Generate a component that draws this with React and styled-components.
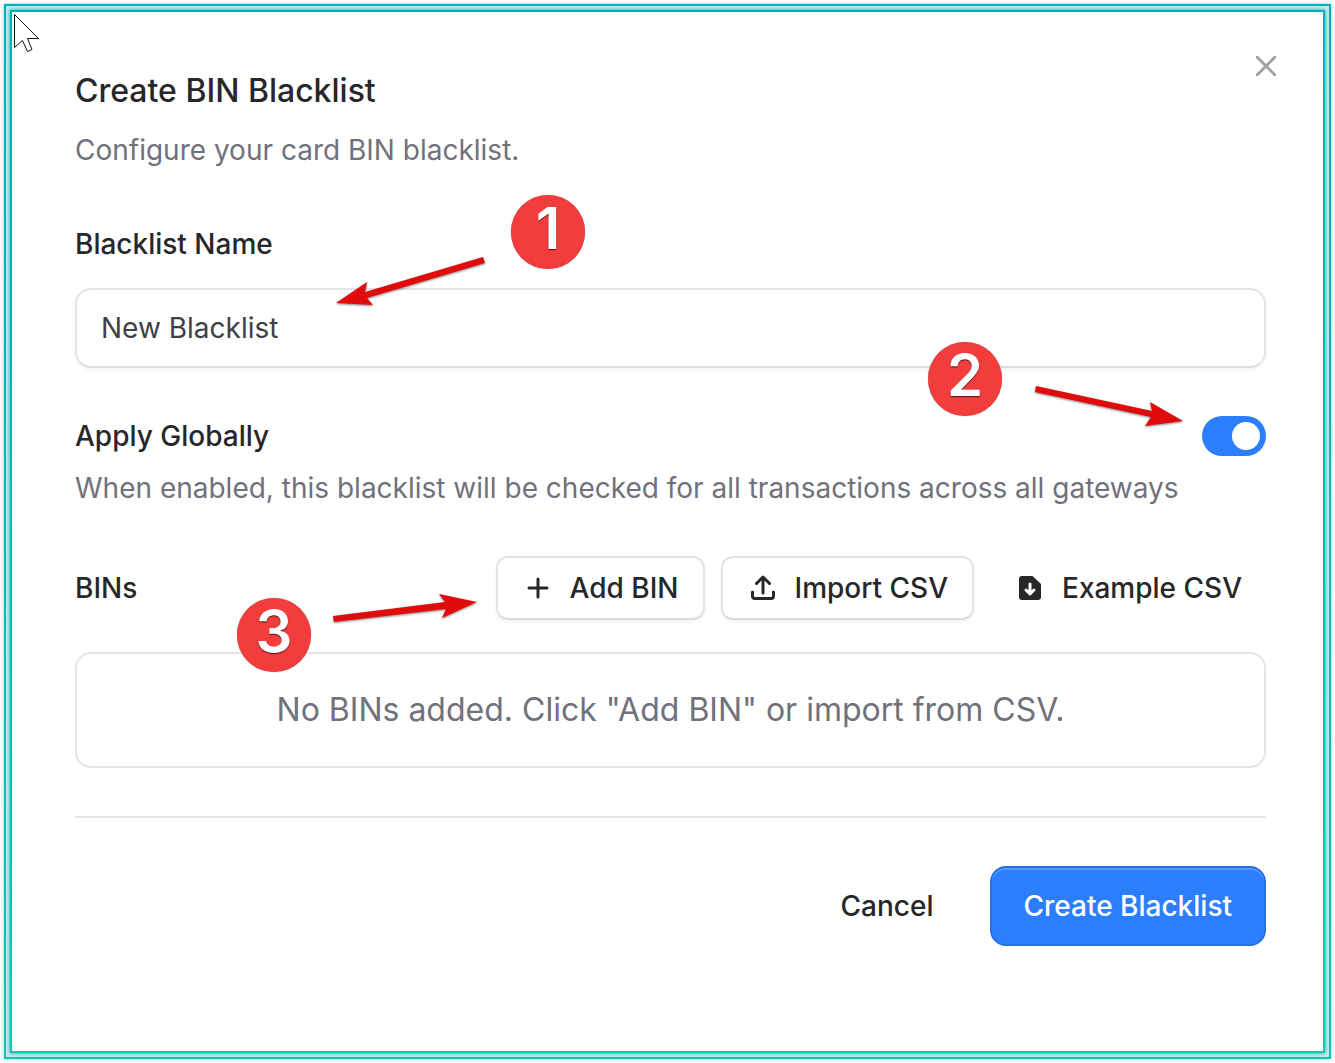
import React, { useState } from 'react'
import styled, { createGlobalStyle, css } from 'styled-components'

const GlobalStyle = createGlobalStyle`
  *, *::before, *::after {
    box-sizing: border-box;
  }

  body {
    margin: 0;
    background-color: #fff;
    font-family: Inter, sans-serif;
    font-size: 28px;
    line-height: 40px;
    font-optical-sizing: none;
    color: #27272a;
  }

  h2, p {
    margin: 0;
  }

  button, input {
    font: inherit;
    color: inherit;
  }
`

const Page = styled.div`
  display: flex;
  min-height: 100vh;
  padding: 4px;
`

const Frame = styled.div`
  flex: 1;
  display: flex;
  border: 2px solid;
  border-image: linear-gradient(#00b0c0, #08c8b0) 1;
  padding: 4px;
  background-color: #c4ecec;
  box-shadow: 0 0 4px rgba(0, 110, 110, 0.4);
`

const Dialog = styled.main`
  position: relative;
  flex: 1;
  border: 2px solid;
  border-image: linear-gradient(#00b0c0, #08c8b0) 1;
  padding: 55px 57px 48px 63px;
  background-color: #fff;
  box-shadow: 0 0 4px rgba(0, 150, 160, 0.9);
`

const CloseButton = styled.button`
  position: absolute;
  top: 34px;
  right: 37px;
  display: flex;
  padding: 10px;
  border: none;
  background: none;
  color: #9f9fa9;
`

const Header = styled.header`
  display: flex;
  flex-direction: column;
  gap: 15px;
  margin-block-end: 54px;
`

const Title = styled.h2`
  font-size: 32px;
  font-weight: 500;
  line-height: 48px;
`

const Muted = styled.p`
  color: #71717b;
`

const Form = styled.form`
  display: flex;
  flex-direction: column;
  gap: 48px;
`

const Field = styled.div`
  display: flex;
  flex-direction: column;
  gap: ${({ $gap }) => $gap}px;
`

const Label = styled.label`
  font-weight: 500;
`

const TextInput = styled.input`
  width: 100%;
  height: 80px;
  padding: 0 24px;
  border: 2px solid #e4e4e6;
  border-bottom-color: #dcdcde;
  border-radius: 16px;
  background-color: #fff;
  color: #3f3f46;
  outline: none;
  box-shadow: 0 2px 4px rgba(0, 0, 0, 0.05);
`

const Row = styled.div`
  display: flex;
  align-items: center;
  justify-content: space-between;
  gap: 16px;
`

const Switch = styled.input`
  appearance: none;
  display: flex;
  width: 64px;
  height: 40px;
  margin: 0;
  padding: 6px;
  border-radius: 20px;
  background-color: #d4d4d8;

  &::before {
    content: '';
    width: 28px;
    height: 28px;
    border-radius: 50%;
    background-color: #fff;
  }

  &:checked {
    justify-content: flex-end;
    background-color: #2b7fff;
  }
`

const Actions = styled.div`
  display: flex;
  gap: 16px;
`

const ToolButton = styled.button`
  display: flex;
  align-items: center;
  gap: 16px;
  height: 64px;
  padding: 0 24px;
  border: none;
  border-radius: 12px;
  background-color: #fff;
  font-weight: 500;
  white-space: nowrap;

  ${({ $outlined }) =>
    $outlined &&
    css`
      border: 2px solid #e4e4e6;
      border-bottom-color: #dcdcde;
      box-shadow: 0 2px 4px rgba(0, 0, 0, 0.05);
    `}
`

const EmptyState = styled.p`
  padding: 32px;
  border: 2px solid #e4e4e6;
  border-radius: 16px;
  font-size: 32px;
  line-height: 48px;
  text-align: center;
  color: #71717b;
`

const Footer = styled.footer`
  display: flex;
  justify-content: flex-end;
  gap: 24px;
  padding-block-start: 48px;
  border-block-start: 2px solid #e4e4e6;
`

const FooterButton = styled.button`
  height: 80px;
  padding: 0 32px;
  border: none;
  border-radius: 16px;
  background-color: transparent;
  font-weight: 500;

  ${({ $primary }) =>
    $primary &&
    css`
      border: 2px solid #2672e5;
      background-color: #2b7fff;
      color: #fff;
      box-shadow: inset 0 2px 0 rgba(255, 255, 255, 0.2);
    `}
`

const Badge = styled.span`
  position: absolute;
  top: ${({ $y }) => $y}px;
  left: ${({ $x }) => $x}px;
  width: 74px;
  height: 74px;
  border-radius: 50%;
  background-color: #f33c3c;
  box-shadow: 0 0 1px rgba(0, 0, 0, 0.6);
  font-size: 58px;
  font-weight: 600;
  line-height: 66px;
  text-align: center;
  color: #fff;
  text-shadow: 0 1px 1px rgba(0, 0, 0, 0.7);
`

const Drawing = styled.svg`
  position: absolute;
  top: ${({ $y }) => $y}px;
  left: ${({ $x }) => $x}px;
  pointer-events: none;
`

const Arrow = styled(Drawing)`
  fill: #e00b0b;
  overflow: visible;
  filter: drop-shadow(0 1px 1px rgba(0, 0, 0, 0.5));
`

const CloseIcon = () => (
  <svg width="20" height="20" viewBox="0 0 20 20" fill="none">
    <path
      d="M1 1l18 18M19 1L1 19"
      stroke="currentColor"
      strokeWidth="3"
      strokeLinecap="round"
    />
  </svg>
)

const PlusIcon = () => (
  <svg width="32" height="32" viewBox="0 0 32 32" fill="none">
    <path
      d="M16 7v18M7 16h18"
      stroke="currentColor"
      strokeWidth="3"
      strokeLinecap="round"
    />
  </svg>
)

const UploadIcon = () => (
  <svg width="32" height="32" viewBox="0 0 32 32" fill="none">
    <path
      d="M16 21V6M9.500 11.500L16 5l6.500 6.500M5.500 20v4a2.500 2.500 0 0 0 2.500 2.500h16a2.500 2.500 0 0 0 2.500-2.500v-4"
      stroke="currentColor"
      strokeWidth="3"
      strokeLinecap="round"
      strokeLinejoin="round"
    />
  </svg>
)

const FileDownIcon = () => (
  <svg width="32" height="32" viewBox="0 0 32 32" fill="none">
    <path
      d="M8 4h10.500l8.500 8v13a3 3 0 0 1-3 3H8a3 3 0 0 1-3-3V7a3 3 0 0 1 3-3z"
      fill="currentColor"
    />
    <path
      d="M16 12v9M12 18l4 4 4-4"
      stroke="#fff"
      strokeWidth="3"
      strokeLinecap="round"
      strokeLinejoin="round"
    />
  </svg>
)

const Cursor = () => (
  <Drawing $x={0} $y={0} width="28" height="42" viewBox="12 12 28 42">
    <path
      d="M14.500 14.500v33l8-7 5 11 4.500-2-4.500-11h11z"
      fill="#fff"
      stroke="#111"
      strokeWidth="1"
    />
  </Drawing>
)

const App = () => {
  const [name, setName] = useState('New Blacklist')
  const [isGlobal, setIsGlobal] = useState(true)

  return (
    <Page>
      <GlobalStyle />
      <Frame>
        <Dialog>
          <CloseButton type="button" aria-label="Close">
            <CloseIcon />
          </CloseButton>
          <Header>
            <Title>Create BIN Blacklist</Title>
            <Muted>Configure your card BIN blacklist.</Muted>
          </Header>
          <Form onSubmit={(e) => e.preventDefault()}>
            <Field $gap={24}>
              <Label htmlFor="name">Blacklist Name</Label>
              <TextInput
                id="name"
                value={name}
                onChange={(e) => setName(e.target.value)}
              />
            </Field>
            <Field $gap={12}>
              <Row>
                <Label htmlFor="global">Apply Globally</Label>
                <Switch
                  id="global"
                  type="checkbox"
                  checked={isGlobal}
                  onChange={(e) => setIsGlobal(e.target.checked)}
                />
              </Row>
              <Muted>
                When enabled, this blacklist will be checked for all
                transactions across all gateways
              </Muted>
            </Field>
            <Field $gap={32}>
              <Row>
                <Label as="span">BINs</Label>
                <Actions>
                  <ToolButton type="button" $outlined>
                    <PlusIcon />
                    Add BIN
                  </ToolButton>
                  <ToolButton type="button" $outlined>
                    <UploadIcon />
                    Import CSV
                  </ToolButton>
                  <ToolButton type="button">
                    <FileDownIcon />
                    Example CSV
                  </ToolButton>
                </Actions>
              </Row>
              <EmptyState>
                No BINs added. Click "Add BIN" or import from CSV.
              </EmptyState>
            </Field>
            <Footer>
              <FooterButton type="button">Cancel</FooterButton>
              <FooterButton type="submit" $primary>
                Create Blacklist
              </FooterButton>
            </Footer>
          </Form>

          {/* walkthrough markers */}
          <Badge $x={499} $y={183}>1</Badge>
          <Arrow $x={324} $y={245} width="149" height="49" viewBox="0 0 149 49">
            <path d="M0 46L31 25 29 35 147 0 149 6 31 41 37 48z" />
          </Arrow>
          <Badge $x={916} $y={330}>2</Badge>
          <Arrow $x={1023} $y={374} width="148" height="41" viewBox="0 0 148 41">
            <path d="M148 35L115 16 117 25 1 0 0 6 116 31 110 40z" />
          </Arrow>
          <Badge $x={225} $y={586}>3</Badge>
          <Arrow $x={321} $y={582} width="144" height="29" viewBox="0 0 144 29">
            <path d="M144 8L106 0 112 8 0 22 1 28 113 15 109 24z" />
          </Arrow>
          <Cursor />
        </Dialog>
      </Frame>
    </Page>
  )
}

export default App
